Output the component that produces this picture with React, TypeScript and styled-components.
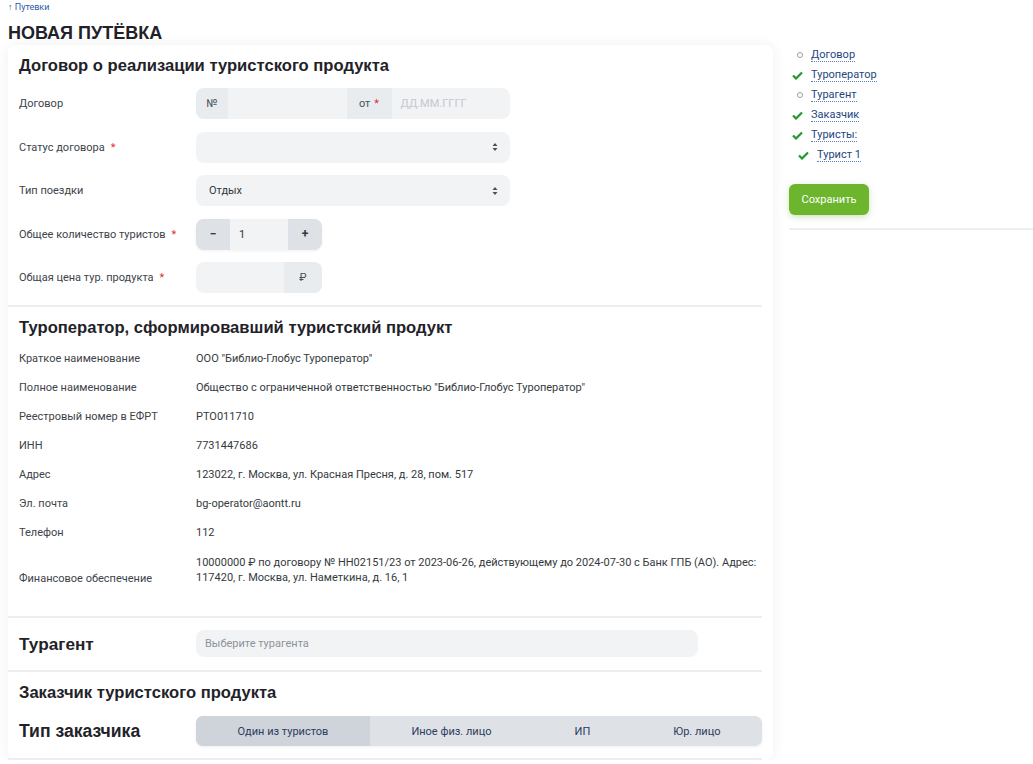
import React from "react";
import styled, { createGlobalStyle } from "styled-components";

const GlobalStyle = createGlobalStyle`
  body {
    margin: 0;
    background: #fff;
    font-family: Roboto, "Liberation Sans", sans-serif;
    color: #343a40;
  }
`;

const Page = styled.div`
  padding: 0 0 0 8px;
`;

const Crumb = styled.a`
  display: block;
  height: 14px;
  font-size: 9px;
  line-height: 14px;
  color: #2f5aa8;
  text-decoration: none;
`;

const PageTitle = styled.h1`
  margin: 8px 0 1px;
  font-family: "Liberation Sans", Arial, sans-serif;
  font-size: 18px;
  line-height: 22px;
  font-weight: 700;
  color: #1f2329;
`;

const Layout = styled.div`
  display: grid;
  grid-template-columns: 765px 1fr;
  gap: 16px;
  align-items: start;
`;

const Card = styled.div`
  background: #fff;
  border-radius: 8px;
  box-shadow: 0 0 14px rgba(30, 40, 60, 0.07);
  padding-right: 11px;
`;

const Section = styled.section<{ $pt?: number; $pb?: number }>`
  padding: ${(p) => p.$pt ?? 10}px 0 ${(p) => p.$pb ?? 12}px 11px;
  border-bottom: 2px solid #eceff2;
`;

const SectionTitle = styled.h2<{ $mb?: number; $size?: number }>`
  margin: 0 0 ${(p) => p.$mb ?? 0}px;
  font-family: "Liberation Sans", Arial, sans-serif;
  font-size: ${(p) => p.$size ?? 16.6}px;
  line-height: 22px;
  font-weight: 700;
  color: #1f2329;
`;

const Form = styled.div`
  display: flex;
  flex-direction: column;
  gap: 12.5px;
  margin-top: 11px;
`;

const Row = styled.div<{ $align?: string }>`
  display: grid;
  grid-template-columns: 177px 1fr;
  align-items: ${(p) => p.$align ?? "center"};
`;

const Label = styled.label`
  font-size: 11px;
  color: #3d434a;
`;

const Req = styled.span`
  color: #e03131;
  margin-left: 6px;
`;

const InputBox = styled.div<{ $w?: number; $h?: number }>`
  display: flex;
  align-items: stretch;
  width: ${(p) => p.$w ?? 314}px;
  height: ${(p) => p.$h ?? 31}px;
  background: #f1f3f5;
  border-radius: 8px;
  overflow: hidden;
  font-size: 11px;
`;

const Addon = styled.span<{ $w: number }>`
  flex: 0 0 ${(p) => p.$w}px;
  display: flex;
  align-items: center;
  justify-content: center;
  background: #e9ecef;
  color: #495057;
  font-size: 11px;
`;

const Field = styled.span<{ $tone?: string }>`
  flex: 1;
  display: flex;
  align-items: center;
  padding: 0 9px;
  color: ${(p) => p.$tone ?? "#343a40"};
`;

const SelectBox = styled(InputBox)`
  justify-content: space-between;
  align-items: center;
  padding: 0 12px 0 13px;
  box-sizing: border-box;
  color: #343a40;
`;

const Stepper = styled(InputBox)`
  box-shadow: 0 1px 3px rgba(0, 0, 0, 0.06);
`;

const StepBtn = styled.button`
  flex: 0 0 34px;
  border: 0;
  background: #dee2e6;
  color: #343a40;
  font-family: inherit;
  font-size: 12px;
  font-weight: 700;
  padding: 0;
`;

const InfoList = styled.div`
  display: flex;
  flex-direction: column;
  gap: 14px;
  margin-top: 12px;
`;

const Value = styled.div`
  font-size: 11px;
  line-height: 15px;
  color: #343a40;
`;

const Segmented = styled.div`
  display: flex;
  height: 30px;
  background: #dee2e6;
  border-radius: 7px;
  overflow: hidden;
  box-shadow: 0 1px 3px rgba(0, 0, 0, 0.07);
`;

const Segment = styled.button<{ $active?: boolean }>`
  flex: 1 1 auto;
  border: 0;
  padding: 0;
  background: ${(p) => (p.$active ? "#ced4da" : "transparent")};
  color: #2c3b5e;
  font-family: inherit;
  font-size: 11px;
`;

const Side = styled.aside``;

const Nav = styled.ul`
  list-style: none;
  margin: 0;
  padding: 0;
`;

const NavItem = styled.li<{ $indent?: number }>`
  display: flex;
  align-items: center;
  height: 20px;
  padding-left: ${(p) => p.$indent ?? 0}px;
`;

const Mark = styled.span`
  width: 16px;
  flex: 0 0 16px;
  display: flex;
  justify-content: center;
  margin-right: 6px;
`;

const Dot = styled.span`
  width: 4px;
  height: 4px;
  border: 1px solid #9aa0a6;
  border-radius: 50%;
  margin-left: 6px;
`;

const NavLink = styled.a`
  font-size: 11px;
  color: #23467f;
  text-decoration: none;
  border-bottom: 1px dotted #5b7fc4;
  line-height: 13px;
`;

const SaveButton = styled.button`
  margin-top: 19px;
  width: 80px;
  height: 31px;
  border: 0;
  border-radius: 6px;
  background: #6cb52d;
  color: #fff;
  font-family: inherit;
  font-size: 11px;
  box-shadow: 0 2px 6px rgba(90, 160, 40, 0.3);
`;

const SideRule = styled.hr`
  margin: 13px 0 0;
  border: 0;
  border-top: 2px solid #eceff2;
`;

const Arrows = () => (
  <svg width="6" height="10" viewBox="0 0 6 10">
    <path d="M3 1 L5.5 4 H0.5 Z M3 9 L5.5 6 H0.5 Z" fill="#495057" />
  </svg>
);

const Check = () => (
  <svg width="11" height="9" viewBox="0 0 11 9">
    <path d="M1 4.5 L4 7.5 L10 1.5" fill="none" stroke="#1e9a2a" strokeWidth="2.2" />
  </svg>
);

const operator: [string, string][] = [
  ["Краткое наименование", "ООО \"Библио-Глобус Туроператор\""],
  ["Полное наименование", "Общество с ограниченной ответственностью \"Библио-Глобус Туроператор\""],
  ["Реестровый номер в ЕФРТ", "РТО011710"],
  ["ИНН", "7731447686"],
  ["Адрес", "123022, г. Москва, ул. Красная Пресня, д. 28, пом. 517"],
  ["Эл. почта", "bg-operator@aontt.ru"],
  ["Телефон", "112"],
];

const navItems = [
  { name: "Договор", done: false },
  { name: "Туроператор", done: true },
  { name: "Турагент", done: false },
  { name: "Заказчик", done: true },
  { name: "Туристы:", done: true },
  { name: "Турист 1", done: true, indent: 6 },
];

export default function App() {
  return (
    <Page>
      <GlobalStyle />
      <Crumb href="#">↑ Путевки</Crumb>
      <PageTitle>НОВАЯ ПУТЁВКА</PageTitle>
      <Layout>
        <Card>
          <Section $pb={12}>
            <SectionTitle>Договор о реализации туристского продукта</SectionTitle>
            <Form>
              <Row>
                <Label>Договор</Label>
                <InputBox>
                  <Addon $w={32}>№</Addon>
                  <Field />
                  <Addon $w={45}>
                    от<Req style={{ marginLeft: 4 }}>*</Req>
                  </Addon>
                  <Field $tone="#c4c9cf">ДД.ММ.ГГГГ</Field>
                </InputBox>
              </Row>
              <Row>
                <Label>
                  Статус договора<Req>*</Req>
                </Label>
                <SelectBox>
                  <span />
                  <Arrows />
                </SelectBox>
              </Row>
              <Row>
                <Label>Тип поездки</Label>
                <SelectBox>
                  <span>Отдых</span>
                  <Arrows />
                </SelectBox>
              </Row>
              <Row>
                <Label>
                  Общее количество туристов<Req>*</Req>
                </Label>
                <Stepper $w={126}>
                  <StepBtn>−</StepBtn>
                  <Field>1</Field>
                  <StepBtn>+</StepBtn>
                </Stepper>
              </Row>
              <Row>
                <Label>
                  Общая цена тур. продукта<Req>*</Req>
                </Label>
                <InputBox $w={126}>
                  <Field />
                  <Addon $w={38}>₽</Addon>
                </InputBox>
              </Row>
            </Form>
          </Section>

          <Section $pb={31}>
            <SectionTitle>Туроператор, сформировавший туристский продукт</SectionTitle>
            <InfoList>
              {operator.map(([k, v]) => (
                <Row key={k}>
                  <Label>{k}</Label>
                  <Value>{v}</Value>
                </Row>
              ))}
              <Row $align="end" style={{ marginTop: 1 }}>
                <Label>Финансовое обеспечение</Label>
                <Value>
                  10000000 ₽ по договору № НН02151/23 от 2023-06-26, действующему до 2024-07-30 с Банк ГПБ (АО). Адрес:
                  117420, г. Москва, ул. Наметкина, д. 16, 1
                </Value>
              </Row>
            </InfoList>
          </Section>

          <Section $pt={12} $pb={13}>
            <Row>
              <SectionTitle $size={17.2}>Турагент</SectionTitle>
              <InputBox $w={502} $h={27}>
                <Field $tone="#8c939a">Выберите турагента</Field>
              </InputBox>
            </Row>
          </Section>

          <Section $pt={10} $pb={12}>
            <SectionTitle $mb={12}>Заказчик туристского продукта</SectionTitle>
            <Row>
              <SectionTitle $size={17.6}>Тип заказчика</SectionTitle>
              <Segmented>
                <Segment $active>Один из туристов</Segment>
                <Segment>Иное физ. лицо</Segment>
                <Segment>ИП</Segment>
                <Segment>Юр. лицо</Segment>
              </Segmented>
            </Row>
          </Section>
        </Card>

        <Side>
          <Nav>
            {navItems.map((it) => (
              <NavItem key={it.name} $indent={it.indent}>
                <Mark>{it.done ? <Check /> : <Dot />}</Mark>
                <NavLink href="#">{it.name}</NavLink>
              </NavItem>
            ))}
          </Nav>
          <SaveButton>Сохранить</SaveButton>
          <SideRule />
        </Side>
      </Layout>
    </Page>
  );
}
